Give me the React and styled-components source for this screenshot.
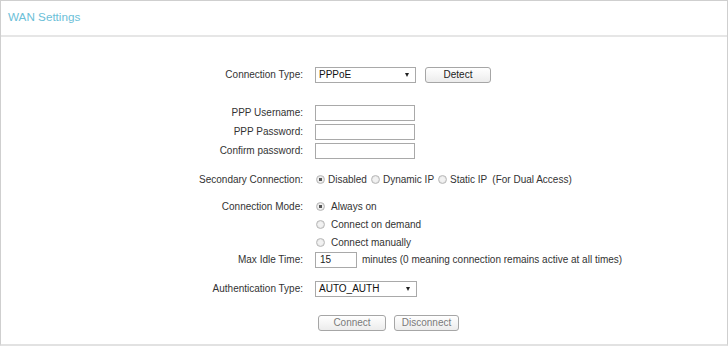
import React from 'react';
import styled, { createGlobalStyle } from 'styled-components';

const GlobalStyle = createGlobalStyle`
  html, body {
    margin: 0;
    padding: 0;
    background: #fff;
  }
  body {
    font-family: "Liberation Sans", Arial, sans-serif;
  }
`;

const Frame = styled.div`
  box-sizing: border-box;
  width: 728px;
  height: 346px;
  border: 1px solid #cfcfcf;
  border-bottom: 2px solid #e2e2e2;
  background: #fff;
  display: flex;
  flex-direction: column;
`;

const Header = styled.div`
  height: 36px;
  border-bottom: 2px solid #e6e6e6;
  display: flex;
  align-items: center;
  padding-left: 7px;
  padding-bottom: 3px;
  box-sizing: border-box;
`;

const Title = styled.h2`
  margin: 0;
  font-size: 11.7px;
  font-weight: normal;
  color: #6cc0d8;
`;

const Form = styled.div`
  display: flex;
  flex-direction: column;
  padding-top: 28px;
  font-size: 10px;
  color: #333;
`;

const Row = styled.div`
  display: grid;
  grid-template-columns: 302px 1fr;
  column-gap: 12px;
  align-items: center;
  height: ${({ $h }) => $h || 19}px;
  margin-top: ${({ $mt }) => $mt || 0}px;
`;

const Label = styled.label`
  text-align: right;
  white-space: nowrap;
`;

const Controls = styled.div`
  display: flex;
  align-items: center;
  gap: ${({ $gap }) => $gap || 0}px;
  padding-left: ${({ $pl }) => $pl || 0}px;
  white-space: nowrap;
`;

const TextInput = styled.input`
  box-sizing: border-box;
  width: ${({ $w }) => $w || 100}px;
  height: 16px;
  border: 1px solid #a9a9a9;
  padding: 0 4px;
  margin: 0;
  font: inherit;
  font-size: 10px;
  color: #222;
  background: #fff;
  outline: none;
`;

const SelectBox = styled.div`
  box-sizing: border-box;
  width: ${({ $w }) => $w || 101}px;
  height: 16px;
  border: 1px solid #a9a9a9;
  padding: 0 6px 0 3px;
  display: flex;
  align-items: center;
  justify-content: space-between;
  font-size: 10px;
  color: #111;
  background: #fff;
`;

const Caret = styled.span`
  width: 0;
  height: 0;
  border-left: 2.5px solid transparent;
  border-right: 2.5px solid transparent;
  border-top: 4px solid #222;
`;

const Button = styled.button`
  box-sizing: border-box;
  width: ${({ $w }) => $w}px;
  height: 16px;
  margin: 0;
  padding: 0;
  border: 1px solid #a6a6a6;
  border-radius: 3px;
  background: linear-gradient(#ffffff, #ececec);
  font-family: inherit;
  font-size: 10px;
  color: ${({ disabled }) => (disabled ? '#7a7a7a' : '#222')};
`;

const RadioItem = styled.span`
  display: inline-flex;
  align-items: center;
  gap: ${({ $gap }) => $gap || 3}px;
`;

const RadioDot = styled.span`
  box-sizing: border-box;
  width: 9px;
  height: 9px;
  border-radius: 50%;
  border: 1px solid #b8b8b8;
  background: radial-gradient(
    circle,
    ${({ $on }) => ($on ? '#555 0, #555 1.6px, ' : '')}#f2f2f2 2px,
    #dcdcdc 4px
  );
  margin-left: 1px;
`;

const Radio = ({ on, gap, children }) => (
  <RadioItem $gap={gap}>
    <RadioDot $on={on} />
    {children}
  </RadioItem>
);

const Note = styled.span`
  margin-left: ${({ $ml }) => $ml || 0}px;
`;

export default function App() {
  return (
    <>
      <GlobalStyle />
      <Frame>
        <Header>
          <Title>WAN Settings</Title>
        </Header>
        <Form>
          <Row>
            <Label>Connection Type:</Label>
            <Controls $gap={9}>
              <SelectBox>
                <span>PPPoE</span>
                <Caret />
              </SelectBox>
              <Button $w={66}>Detect</Button>
            </Controls>
          </Row>

          <Row $mt={19}>
            <Label>PPP Username:</Label>
            <Controls>
              <TextInput />
            </Controls>
          </Row>
          <Row>
            <Label>PPP Password:</Label>
            <Controls>
              <TextInput type="password" />
            </Controls>
          </Row>
          <Row>
            <Label>Confirm password:</Label>
            <Controls>
              <TextInput type="password" />
            </Controls>
          </Row>

          <Row $mt={10}>
            <Label>Secondary Connection:</Label>
            <Controls $gap={3}>
              <Radio on>Disabled</Radio>
              <Radio>Dynamic IP</Radio>
              <Radio>Static IP</Radio>
              <Note $ml={2}>(For Dual Access)</Note>
            </Controls>
          </Row>

          <Row $mt={8} $h={18}>
            <Label>Connection Mode:</Label>
            <Controls>
              <Radio on gap={6}>Always on</Radio>
            </Controls>
          </Row>
          <Row $h={18}>
            <span />
            <Controls>
              <Radio gap={6}>Connect on demand</Radio>
            </Controls>
          </Row>
          <Row $h={18}>
            <span />
            <Controls>
              <Radio gap={6}>Connect manually</Radio>
            </Controls>
          </Row>
          <Row $h={17}>
            <Label>Max Idle Time:</Label>
            <Controls $gap={5}>
              <TextInput $w={42} defaultValue="15" />
              <span>minutes (0 meaning connection remains active at all times)</span>
            </Controls>
          </Row>

          <Row $mt={11}>
            <Label>Authentication Type:</Label>
            <Controls>
              <SelectBox $w={102}>
                <span>AUTO_AUTH</span>
                <Caret />
              </SelectBox>
            </Controls>
          </Row>

          <Row $mt={15}>
            <span />
            <Controls $gap={8} $pl={3}>
              <Button $w={68} disabled>
                Connect
              </Button>
              <Button $w={65} disabled>
                Disconnect
              </Button>
            </Controls>
          </Row>
        </Form>
      </Frame>
    </>
  );
}
